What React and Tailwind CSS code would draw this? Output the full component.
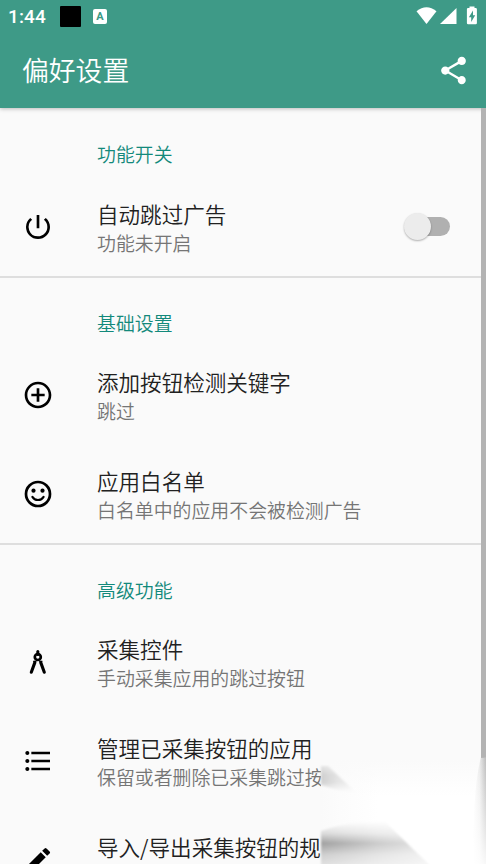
import React from "react";
import {
  MdAddCircleOutline,
  MdEdit,
  MdFormatListBulleted,
  MdPowerSettingsNew,
  MdShare,
} from "react-icons/md";

const SmileIcon = ({ size = 32 }) => (
  <svg width={size} height={size} viewBox="0 0 32 32" fill="none" stroke="currentColor">
    <circle cx="16" cy="16" r="12" strokeWidth="2.7" />
    <circle cx="11.5" cy="12.7" r="2.1" fill="currentColor" stroke="none" />
    <circle cx="20.5" cy="12.7" r="2.1" fill="currentColor" stroke="none" />
    <path d="M10.4 18.9Q12.2 22 16 22T21.6 18.9" strokeWidth="2.1" strokeLinecap="round" />
  </svg>
);

const CompassIcon = ({ size = 32 }) => (
  <svg width={size} height={size} viewBox="0 0 32 32" fill="none" stroke="currentColor">
    <path d="M15.8 5.6v3" strokeWidth="3" strokeLinecap="round" />
    <circle cx="15.8" cy="11" r="3" strokeWidth="2.7" />
    <path d="M12.9 16.4 9.3 26.2M18.7 16.4l3.6 9.8" strokeWidth="3.1" strokeLinecap="round" />
    <path d="M11.2 15.3h3.2M17.2 15.3h3.2" strokeWidth="1.3" />
  </svg>
);

const SECTIONS = [
  {
    title: "功能开关",
    items: [
      { icon: MdPowerSettingsNew, title: "自动跳过广告", summary: "功能未开启", toggle: true },
    ],
  },
  {
    title: "基础设置",
    items: [
      { icon: MdAddCircleOutline, title: "添加按钮检测关键字", summary: "跳过" },
      { icon: SmileIcon, title: "应用白名单", summary: "白名单中的应用不会被检测广告" },
    ],
  },
  {
    title: "高级功能",
    items: [
      { icon: CompassIcon, title: "采集控件", summary: "手动采集应用的跳过按钮" },
      { icon: MdFormatListBulleted, title: "管理已采集按钮的应用", summary: "保留或者删除已采集跳过按" },
      { icon: MdEdit, title: "导入/导出采集按钮的规", summary: "" },
    ],
  },
];

/* -------------------- Status bar -------------------- */
const StatusBar = () => (
  <div className="flex h-8 items-center pr-2 pl-2">
    <span className="w-[52px] pt-0.5 font-['Roboto','Liberation_Sans',sans-serif] text-[19px] leading-8 font-medium tracking-[0.1px]">
      1:44
    </span>
    <span className="h-[21px] w-[21px] rounded-[1px] bg-black" />
    <span className="ml-3 flex h-[15px] w-[14px] items-center justify-center rounded-[2px] bg-white font-['Roboto','Liberation_Sans',sans-serif] text-[11px] leading-none font-bold text-[#3c9985]">
      A
    </span>
    <svg className="ml-auto" width="62" height="20" viewBox="0 0 62 20" fill="currentColor">
      <path d="M0.5 5.2Q10.5-2.8 20.5 5.2L10.5 18Z" />
      <path d="M40.5 2v16H24Z" />
      <path
        fillRule="evenodd"
        d="M53.5 .5h5v1.6h1.2q1.2 0 1.2 1.2V17q0 1.2-1.2 1.2h-7.6q-1.2 0-1.2-1.2V3.3q0-1.2 1.2-1.2h1.4ZM57 4.5l-4.1 6.7h2.3V16l4-6.7h-2.2Z"
      />
    </svg>
  </div>
);

const Toggle = () => (
  <button className="relative mr-9 flex h-7 w-[46px] items-center justify-end" role="switch" aria-checked="false">
    <span className="h-[19px] w-[38px] rounded-full bg-[#b0b0b0]" />
    <span className="absolute top-0 left-0 h-[27px] w-[27px] rounded-full bg-[#ececec] shadow-[0_1px_2px_rgba(0,0,0,0.3)]" />
  </button>
);

const PreferenceRow = ({ item }) => {
  const Icon = item.icon;
  return (
    <div className="flex h-[99px] items-center">
      <div className="flex w-[97px] shrink-0 pl-[22px] text-black">
        <Icon size={32} />
      </div>
      <div className="min-w-0 flex-1 pt-[2px] whitespace-nowrap">
        <p className="h-[29px] text-[21.55px] leading-[29px] text-[#212121]">{item.title}</p>
        <p className="h-[28px] text-[18.9px] leading-[29px] text-[#757575]">{item.summary}</p>
      </div>
      {item.toggle && <Toggle />}
    </div>
  );
};

/* -------------------- Smudge over the bottom right corner -------------------- */
const CornerHaze = () => (
  <svg className="absolute right-0 bottom-0" width="167" height="107" viewBox="0 0 167 107">
    <defs>
      <linearGradient id="base">
        <stop offset="0" stopColor="#fafafa" />
        <stop offset="0.12" stopColor="#fcfcfc" />
        <stop offset="0.35" stopColor="#fff" />
      </linearGradient>
      <linearGradient id="top" x1="0" y1="0" x2="0" y2="1">
        <stop offset="0" stopColor="#fafafa" />
        <stop offset="0.35" stopColor="#fafafa" stopOpacity="0" />
      </linearGradient>
      <linearGradient id="upper" x1="0" y1="0" x2="0" y2="1">
        <stop offset="0" stopColor="#e4e4e4" />
        <stop offset="0.35" stopColor="#cfcfcf" />
        <stop offset="0.6" stopColor="#d0d0d0" />
        <stop offset="1" stopColor="#fcfcfc" />
      </linearGradient>
      <linearGradient id="lower" x1="0" y1="0" x2="0" y2="1">
        <stop offset="0" stopColor="#fefefe" />
        <stop offset="0.25" stopColor="#dcdcdc" />
        <stop offset="0.46" stopColor="#a0a0a0" />
        <stop offset="0.7" stopColor="#cfcfcf" />
        <stop offset="1" stopColor="#e8e8e8" />
      </linearGradient>
      <linearGradient id="fade">
        <stop offset="0" stopColor="#fff" stopOpacity="0" />
        <stop offset="0.5" stopColor="#fff" stopOpacity="0.45" />
        <stop offset="1" stopColor="#fff" stopOpacity="0.75" />
      </linearGradient>
      <linearGradient id="edge">
        <stop offset="0" stopColor="#bcbcbc" stopOpacity="0" />
        <stop offset="0.5" stopColor="#bcbcbc" stopOpacity="0.25" />
        <stop offset="1" stopColor="#bcbcbc" />
      </linearGradient>
      <linearGradient id="edgeFade" x1="0" y1="0" x2="0" y2="1">
        <stop offset="0" stopColor="#fff" stopOpacity="0" />
        <stop offset="1" stopColor="#fff" stopOpacity="0.9" />
      </linearGradient>
      <filter id="soft" x="-10%" y="-10%" width="120%" height="120%">
        <feGaussianBlur stdDeviation="0.8" />
      </filter>
    </defs>
    <path d="M2 3H167V107H2Z" fill="url(#base)" />
    <path d="M2 3H167V107H2Z" fill="url(#top)" />
    <g filter="url(#soft)">
      <path d="M2 9H9L37 36Q20 34 2 28Z" fill="url(#upper)" />
      <path d="M2 9H9L37 36Q20 34 2 28Z" fill="url(#fade)" />
      <path d="M2 74Q35 62 66 65L114 112H2Z" fill="url(#lower)" />
      <path d="M2 74Q35 62 66 65L114 112H2Z" fill="url(#fade)" />
    </g>
    <path d="M162 0h5v107H154Q154 30 162 0Z" fill="url(#edge)" />
    <path d="M162 0h5v107H154Q154 30 162 0Z" fill="url(#edgeFade)" />
  </svg>
);

export default function App() {
  return (
    <div className="relative h-[864px] w-[486px] overflow-hidden bg-[#fafafa] font-['Noto_Sans_CJK_SC','Noto_Sans',sans-serif] font-[350]">
      <header className="relative h-[108px] bg-[#3e9a87] text-white shadow-[0_1px_4px_rgba(0,0,0,0.25)]">
        <StatusBar />
        <div className="flex h-[76px] items-center justify-between pr-4 pl-[22px]">
          <h1 className="text-[26.8px] leading-10">偏好设置</h1>
          <MdShare size={33} />
        </div>
      </header>

      <main>
        {SECTIONS.map((section, i) => (
          <section key={section.title} className={i > 0 ? "border-t-2 border-[#dedede]" : ""}>
            <h2 className={`${i > 0 ? "h-[67px]" : "h-[69px]"} flex items-center pt-[22px] pl-[97px] text-[18.9px] leading-7 text-[#12897b]`}>
              {section.title}
            </h2>
            {section.items.map((item) => (
              <PreferenceRow key={item.title} item={item} />
            ))}
          </section>
        ))}
      </main>

      {/* Scrollbar */}
      <div className="absolute top-[108px] right-0 h-[650px] w-[5.5px] bg-[#b3b3b3]" />
      <CornerHaze />
    </div>
  );
}
